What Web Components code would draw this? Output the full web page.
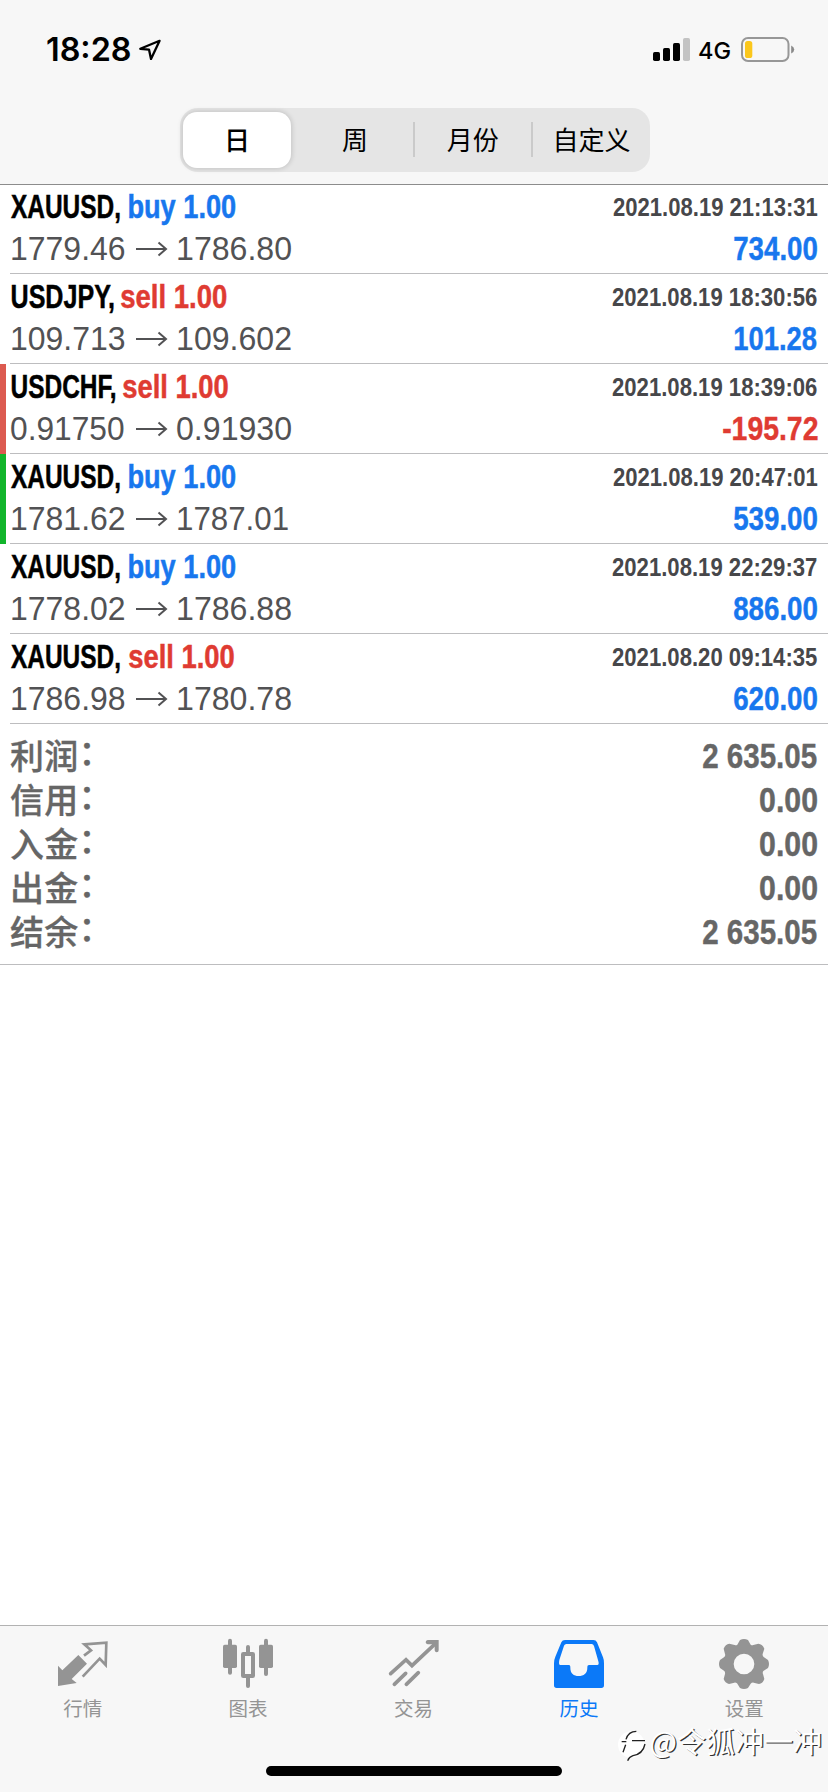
<!DOCTYPE html>
<html lang="zh-CN">
<head>
<meta charset="utf-8">
<title>历史</title>
<style>
html,body{margin:0;height:100%;background:#fff}
body{font-family:"Liberation Sans",Arial,"Noto Sans CJK SC",sans-serif;overflow:hidden}
</style>
</head>
<body>
<history-app></history-app>
<script>
const define = (name, html, setup) => customElements.define(name, class extends HTMLElement {
  connectedCallback() {
    if (this.shadowRoot) return;
    const t = document.createElement('template');
    t.innerHTML = typeof html === 'function' ? html(this) : html;
    this.attachShadow({mode: 'open'}).append(t.content.cloneNode(true));
    if (setup) setup(this);
  }
});

/* Condensed text: squeezes its line so that the ink is exactly w pixels wide. */
const ctx = document.createElement('canvas').getContext('2d');
define('fit-text', `<style>
:host{display:block;white-space:pre;flex:none}
span{display:inline-block;transform-origin:0 50%}
</style><span><slot></slot></span>`, el => {
  const cs = getComputedStyle(el), w = +el.getAttribute('w');
  ctx.font = `${cs.fontWeight} ${cs.fontSize} ${cs.fontFamily}`;
  const m = ctx.measureText(el.textContent);
  const s = w / (m.actualBoundingBoxLeft + m.actualBoundingBoxRight);
  el.style.width = w + 'px';
  el.shadowRoot.querySelector('span').style.transform = `scaleX(${s}) translateX(${m.actualBoundingBoxLeft}px)`;
});

define('status-bar', `<style>
:host{display:flex;height:108px;padding:0 33px 0 47px;box-sizing:border-box;font-family:Inter,sans-serif;color:#000}
fit-text.time{font-size:32px;font-weight:600;line-height:32px;margin-top:34px}
.net{font-size:23.5px;font-weight:500;line-height:24px;margin:39px 0 0 9.5px}
.loc{margin:38px auto 0 8px}
.sig{margin:37px 0 0}
.bat{margin:36px 0 0 10.5px}
svg{flex:none;display:block}
</style>
<fit-text class="time" w="83">18:28</fit-text>
<svg class="loc" width="24" height="24" viewBox="138 38 24 24"><path d="M159.6 40.8 140.3 48.8 149 49.6 151 58.9Z" fill="none" stroke="#000" stroke-width="2.3" stroke-linejoin="round"/></svg>
<svg class="sig" width="37" height="25" viewBox="653 37 37 25"><rect x="653" y="52" width="7" height="9" rx="1.7"/><rect x="663" y="48" width="7" height="13" rx="1.7"/><rect x="673" y="43" width="7" height="18" rx="1.7"/><rect x="683" y="38" width="7" height="23" rx="1.7" fill="#c3c3c3"/></svg>
<fit-text class="net" w="31.5">4G</fit-text>
<svg class="bat" width="54" height="27" viewBox="741 36 54 27"><rect x="742" y="38" width="46.5" height="23" rx="6" fill="none" stroke="#979797" stroke-width="2"/><rect x="745" y="41" width="7.3" height="17" rx="2.6" fill="#fbc71c"/><path d="M791.2 45.5Q794.2 46.8 794.2 49.5T791.2 53.5Z" fill="#8a8a8a"/></svg>`);

define('segmented-control', `<style>
:host{display:grid;grid-template-columns:repeat(4,117.7px);justify-content:start;margin-left:179.5px;width:470px;height:64px;border-radius:18px;background:#e5e5e5}
::slotted(*){display:grid;place-items:center;position:relative}
</style><slot></slot>`);
define('segment-item', `<style>
:host{font:400 26px/36px "Noto Sans CJK SC",sans-serif;color:#000;box-sizing:border-box;padding-bottom:2px}
:host([selected]){font-weight:500;background:#fff;border-radius:14px;margin:3.5px 6px 4px 3.5px;box-shadow:0 0 5px 1px #00000026}
:host([divided]){border-right:2px solid transparent;border-image:linear-gradient(transparent 14px,#cacaca 14px,#cacaca 49px,transparent 49px) 0 2 0 0}
</style><slot></slot>`);

define('trade-row', el => {
  const g = n => el.getAttribute(n), side = g('side');
  const [a, b, c, p] = g('widths').split(' ');
  const early = g('date').endsWith('1'), one = n => g(n)[0] === '1' ? 1 : 0;
  const nudge = g('symbol')[0] === 'U' ? 1 : 0;
  return `<style>
:host{display:block;height:90px;box-sizing:border-box;border-left:6px solid ${g('mark') || 'transparent'};background-clip:padding-box}
.body{height:100%;box-sizing:border-box;border-bottom:1px solid #bdbdbf;margin-left:4px;padding:0 11px 0 1px}
.line{display:flex;align-items:flex-start}
.title{font-size:34px;font-weight:700;line-height:45px;-webkit-text-stroke:.5px}
.symbol{margin-left:${nudge}px}
.buy{color:#1877ee}.sell{color:#df3b32}
.order{margin-left:${b - nudge}px}
.date{font-size:26px;font-weight:700;line-height:46px;color:#47474a;margin-left:auto}
.open{margin-left:${one('open')}px;margin-right:${1 - one('open')}px}
.price{font-size:32.5px;line-height:38px;color:#525254}
.profit{font-size:32.5px;line-height:39px;font-weight:700;margin-left:auto;-webkit-text-stroke:.4px}
svg{flex:none;margin:11px ${9 + one('close')}px 0 10px}
</style><div class="body">
<div class="line"><fit-text class="title symbol" w="${a}">${g('symbol')},</fit-text><fit-text class="title order ${side}" w="${c}">${side} 1.00</fit-text><fit-text class="date" w="${early ? 204.5 : 205}">${g('date')}</fit-text></div>
<div class="line"><fit-text class="price open" w="112.5">${g('open')}</fit-text><svg width="33" height="16" viewBox="0 0 33 16"><path d="M1 8H30.5M23.5 1.5 31 8 23.5 14.5" fill="none" stroke="#525254" stroke-width="2"/></svg><fit-text class="price" w="${g('close').endsWith('1') ? 110 : 113 + 1 - one('close')}">${g('close')}</fit-text><fit-text class="profit ${g('profit')[0] === '-' ? 'sell' : 'buy'}" w="${p}">${g('profit')}</fit-text></div>
</div>`;
});

define('summary-row', el => `<style>
:host{display:flex;height:44px;justify-content:space-between;color:#666;padding:0 11px 0 10px}
.label{font-weight:500;font-size:34px;line-height:50px;font-family:"Liberation Sans","Noto Sans CJK SC",sans-serif;display:flex;letter-spacing:.3px;-webkit-text-stroke:.3px}
.colon{display:block;transform:translate(0,-4px)}
fit-text{font-size:34.5px;font-weight:700;line-height:49px;-webkit-text-stroke:.4px}
</style><span class="label"><slot></slot><span class="colon">：</span></span><fit-text w="${el.getAttribute('w')}">${el.getAttribute('value')}</fit-text>`);

const icons = {
  quotes: `<svg viewBox="171 87 150 150"><path fill="#949494" d="M232 135 258 161 212 207 227 219 171 228V167L184 181Z"/><path fill="none" stroke="#949494" stroke-width="8" d="M249 137 270 121 250 103 316 98 314 165 296 146 245 200"/></svg>`,
  chart: `<svg viewBox="669 87 150 150"><g fill="#949494"><rect x="669" y="104" width="42" height="70" rx="5"/><rect x="684" y="86" width="12" height="108" rx="6"/><rect x="777" y="104" width="42" height="70" rx="5"/><rect x="792" y="86" width="12" height="112" rx="6"/><rect x="738" y="105" width="12" height="28" rx="6"/><rect x="738" y="198" width="12" height="36" rx="6"/></g><rect x="729" y="132" width="30" height="66" rx="1" fill="none" stroke="#949494" stroke-width="12"/></svg>`,
  trade: `<svg viewBox="295 87 150 150"><g fill="none" stroke="#949494" stroke-width="11" stroke-linecap="round"><path stroke-linejoin="miter" d="M300 191 346 149 364 167 434 101"/><path d="M311 223 345 190M347 223 383 188"/></g><path d="M411 90H444V121Q444 127 438 127 433 127 432 121V103H411Q405 102 405 97 405 91 411 90Z" fill="#949494"/></svg>`,
  history: `<svg viewBox="789 87 150 150"><path fill-rule="evenodd" fill="#0b79f8" d="M822 90H907Q915 90 918 97L936 142Q939 149 939 160V226Q939 234 931 234H797Q789 234 789 226V160Q789 149 793 140L811 97Q814 90 822 90ZM826 102Q821 102 819 107L805 150Q802 165 808 165H834Q838 165 838 170V173C838 190 848 198 863 198S889 190 889 173V170Q889 165 894 165H919Q925 165 922 154L909 108Q907 102 902 102Z"/></svg>`,
  settings: `<svg viewBox="393 87 150 150"><path fill-rule="evenodd" fill="#949494" d="M456 90Q468 84 480 90L488 104Q492 107 496 105L511 101Q524 103 529 116L524 132Q523 137 527 141L540 150Q546 162 540 174L526 183Q523 187 525 192L529 207Q525 220 513 222L497 218Q492 217 488 221L480 234Q468 240 456 234L447 220Q443 217 439 218L423 222Q411 219 407 207L411 192Q412 187 409 183L396 174Q390 162 396 150L409 141Q413 137 411 132L407 116Q412 103 424 101L440 105Q444 107 448 104ZM468 131A31 31 0 1 0 468 193 31 31 0 1 0 468 131Z"/></svg>`
};
define('tab-item', el => `<style>
:host{display:flex;flex-direction:column;align-items:center;flex:1;padding-top:13px;color:#949494;font:400 19.5px/28px "Noto Sans CJK SC",sans-serif}
:host([active]){color:#0b79f8}
svg{width:50px;height:50px;display:block;overflow:visible;margin-bottom:5px}
</style>${icons[el.getAttribute('icon')]}<span><slot></slot></span>`);

define('tab-bar', `<style>
:host{display:flex;flex-direction:column;height:167px;box-sizing:border-box;background:#f7f7f7;border-top:1px solid #b2b2b2}
nav{display:flex;padding-right:1px;height:140px}
.home{width:296px;height:10px;border-radius:5px;background:#000;align-self:center}
</style><nav><slot></slot></nav><div class="home"></div>`);

define('water-mark', `<style>
:host{position:absolute;left:617px;top:1720px;display:flex;color:#fff;font:400 29px/40px "Noto Sans CJK SC",sans-serif;text-shadow:1.2px 1.2px .6px #333;white-space:nowrap}
svg{margin-top:8px;flex:none}
span{margin-left:2.5px}
</style>
<svg width="30" height="34" viewBox="0 0 90 102"><circle cx="43" cy="50" r="40" fill="#fff"/><path d="M58 10Q34 10 27 34M14 41H28M45 38H84M84 48Q78 78 48 83 36 87 32 98M26 50 18 73" fill="none" stroke="#222" stroke-width="4"/></svg><span>@令狐冲一冲</span>`);

define('history-app', `<style>
:host{display:flex;flex-direction:column;width:828px;height:1792px;background:#fff;position:relative;overflow:hidden}
header{height:185px;box-sizing:border-box;border-bottom:1px solid #8c8c8c;background:#f7f7f7;position:relative;flex:none}
.list{margin-top:-1px}
.sum{height:241px;box-sizing:border-box;padding-top:8px;border-bottom:1px solid #bdbdbf}
main{flex:1}
</style>
<header><status-bar></status-bar><segmented-control><segment-item selected>日</segment-item><segment-item divided>周</segment-item><segment-item divided>月份</segment-item><segment-item>自定义</segment-item></segmented-control></header>
<main><div class="list">
<trade-row symbol="XAUUSD" side="buy" widths="109 9 106.5 83" date="2021.08.19 21:13:31" open="1779.46" close="1786.80" profit="734.00"></trade-row>
<trade-row symbol="USDJPY" side="sell" widths="102 8 105.5 82" date="2021.08.19 18:30:56" open="109.713" close="109.602" profit="101.28"></trade-row>
<trade-row mark="#dc5a50" symbol="USDCHF" side="sell" widths="103.5 8.5 105 94.5" date="2021.08.19 18:39:06" open="0.91750" close="0.91930" profit="-195.72"></trade-row>
<trade-row mark="#12b52b" symbol="XAUUSD" side="buy" widths="109 9 106.5 83" date="2021.08.19 20:47:01" open="1781.62" close="1787.01" profit="539.00"></trade-row>
<trade-row symbol="XAUUSD" side="buy" widths="109 9 106.5 83" date="2021.08.19 22:29:37" open="1778.02" close="1786.88" profit="886.00"></trade-row>
<trade-row symbol="XAUUSD" side="sell" widths="109 9 105 83" date="2021.08.20 09:14:35" open="1786.98" close="1780.78" profit="620.00"></trade-row>
</div>
<div class="sum">
<summary-row value="2 635.05" w="114">利润</summary-row>
<summary-row value="0.00" w="57">信用</summary-row>
<summary-row value="0.00" w="57">入金</summary-row>
<summary-row value="0.00" w="57">出金</summary-row>
<summary-row value="2 635.05" w="114">结余</summary-row>
</div></main>
<tab-bar><tab-item icon="quotes">行情</tab-item><tab-item icon="chart">图表</tab-item><tab-item icon="trade">交易</tab-item><tab-item icon="history" active>历史</tab-item><tab-item icon="settings">设置</tab-item></tab-bar>
<water-mark></water-mark>`);
</script>
</body>
</html>
